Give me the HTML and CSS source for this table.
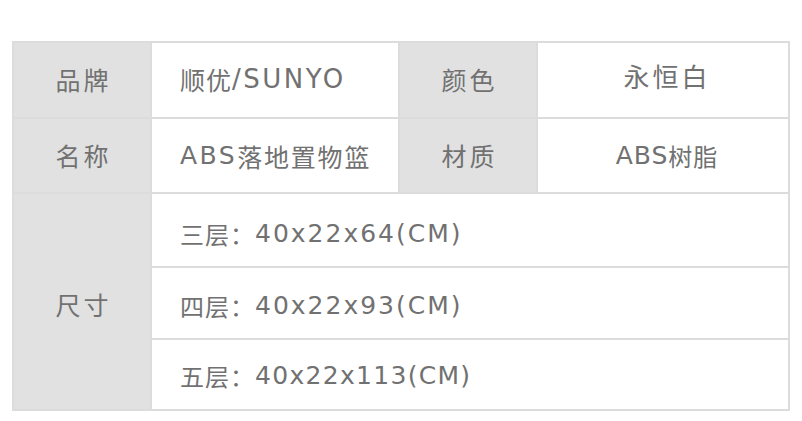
FILE: index.html
```html
<!DOCTYPE html>
<html lang="zh">
<head>
<meta charset="utf-8">
<link rel="stylesheet" href="styles.css">
</head>
<body>
<div class="page">
  <div class="spec">
    <div class="cell label">品牌</div>
    <div class="cell value brand">顺优<span class="en">/SUNYO</span></div>
    <div class="cell label">颜色</div>
    <div class="cell value center raised">永恒白</div>
    <div class="cell label">名称</div>
    <div class="cell value name"><span class="en">ABS</span>落地置物篮</div>
    <div class="cell label">材质</div>
    <div class="cell value center"><span class="en abs">ABS</span>树脂</div>
    <div class="cell label size-label">尺寸</div>
    <div class="cell value size first">三层：<span class="en">40x22x64(CM)</span></div>
    <div class="cell value size">四层：<span class="en">40x22x93(CM)</span></div>
    <div class="cell value size last">五层：<span class="en">40x22x113(CM)</span></div>
  </div>
</div>
</body>
</html>
```
FILE: styles.css
```css
html, body {
  margin: 0;
  padding: 0;
  background: #ffffff;
}
.page {
  padding: 41px 0 0 12px;
}
.spec {
  display: grid;
  width: 778px;
  box-sizing: border-box;
  grid-template-columns: 136px 246px 136px 250px;
  grid-template-rows: 74px 73px 72px 70px 69px;
  gap: 2px;
  border: 2px solid #dcdcdc;
  background: #dcdcdc;
  font-family: "Noto Sans CJK SC", "Noto Sans", sans-serif;
  font-weight: 400;
  color: #717171;
  font-size: 24px;
}
.cell {
  display: flex;
  align-items: center;
}
.label {
  background: #e1e1e1;
  justify-content: center;
  font-size: 25px;
  letter-spacing: 3px;
  padding-left: 3px;
  padding-bottom: 2px;
}
.value {
  background: #ffffff;
  padding-left: 28px;
  letter-spacing: 1px;
}
.en {
  font-family: "DejaVu Sans", "Noto Sans", sans-serif;
  font-size: 25px;
  letter-spacing: 2px;
}
.brand {
  font-size: 25px;
  padding-bottom: 2px;
}
.brand .en {
  font-size: 26px;
  letter-spacing: 2.5px;
}
.name {
  font-size: 25px;
  letter-spacing: 1.8px;
}
.name .en {
  letter-spacing: 2.5px;
}
.value.center {
  justify-content: center;
  padding-left: 8px;
}
.abs {
  letter-spacing: 1px;
}
.raised {
  font-size: 26px;
  letter-spacing: 3px;
  padding-bottom: 9px;
}
.size-label {
  grid-column: 1;
  grid-row: 3 / span 3;
  padding-top: 6px;
}
.size {
  grid-column: 2 / span 3;
  padding-top: 4px;
}
.size.first {
  padding-top: 7px;
}
.size.last {
  padding-top: 1px;
}
.size.last .en {
  letter-spacing: 1.3px;
}
```
